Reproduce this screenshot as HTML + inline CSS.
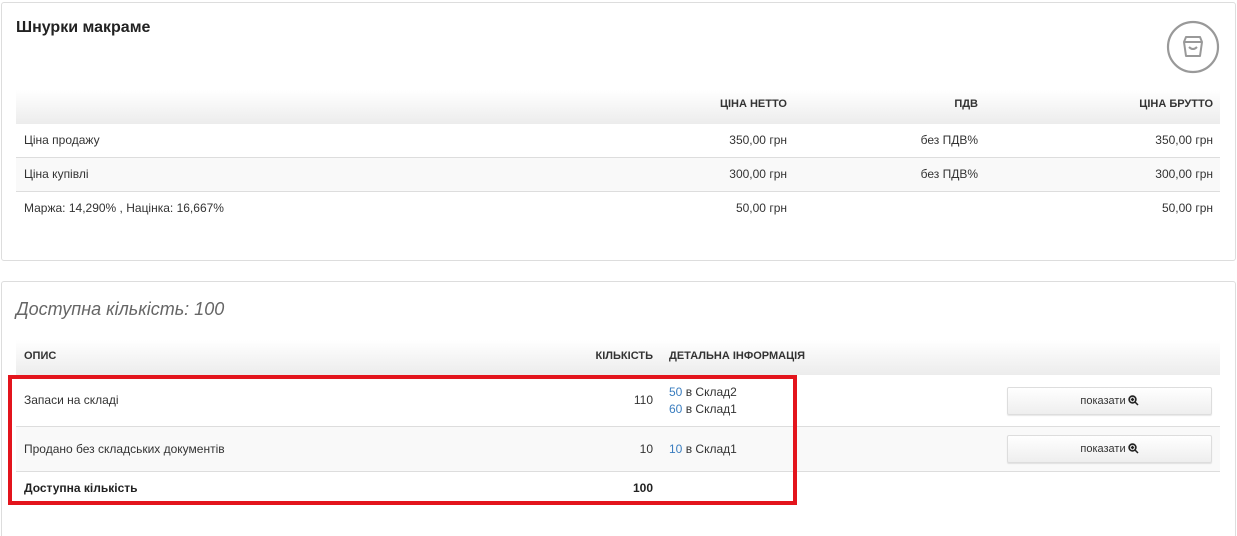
<!DOCTYPE html>
<html><head><meta charset="utf-8"><style>
*{box-sizing:border-box;margin:0;padding:0}
html,body{width:1237px;height:536px;overflow:hidden}
body{background:#fff;font-family:"Liberation Sans",Arial,sans-serif;font-size:12px;color:#333;position:relative}
.panel{position:absolute;border:1px solid #ddd;border-radius:3px;background:#fff}
.abs{position:absolute}
.hdr{position:absolute;background:linear-gradient(#fff,#ececec);}
.th{position:absolute;font-weight:bold;font-size:11px;color:#333}
.row{position:absolute;border-top:1px solid #ddd}
.t{position:absolute;white-space:nowrap}
.r{text-align:right}
.blue{color:#3a7dbf}
.btn{position:absolute;left:1007px;width:205px;height:28px;border:1px solid #ddd;border-radius:2px;background:linear-gradient(#fff,#eee);box-shadow:0 1px 1px rgba(0,0,0,.1);font-size:11px;color:#333;text-align:center;line-height:26px}
.btn svg{vertical-align:-2px;margin-left:2px}
</style></head><body>
<div class="panel" style="left:1px;top:2px;width:1235px;height:259px"></div>
<div class="t" style="left:16px;top:19px;font-size:16px;font-weight:bold;color:#222">Шнурки макраме</div>
<svg class="abs" style="left:1166px;top:20px" width="54" height="54" viewBox="0 0 54 54"><circle cx="27" cy="27" r="25" fill="none" stroke="#999" stroke-width="2.2"/><path d="M18 22 L20 17 H34 L36 22 Z M18 22 H36 L34 36 H20 Z" fill="none" stroke="#999" stroke-width="2" stroke-linejoin="round"/><path d="M23 27 Q27 31 31 27" fill="none" stroke="#999" stroke-width="2"/></svg>
<div class="hdr" style="left:16px;top:90px;width:1204px;height:34px"></div>
<div class="th r" style="left:600px;width:187px;top:98px">ЦІНА НЕТТО</div>
<div class="th r" style="left:800px;width:178px;top:98px">ПДВ</div>
<div class="th r" style="left:1000px;width:213px;top:98px">ЦІНА БРУТТО</div>
<div class="row" style="left:16px;top:157px;width:1204px;height:34px;background:#f9f9f9"></div>
<div class="row" style="left:16px;top:191px;width:1204px;height:34px"></div>
<div class="t" style="left:24px;top:133px">Ціна продажу</div>
<div class="t r" style="left:600px;width:187px;top:133px">350,00 грн</div>
<div class="t r" style="left:800px;width:178px;top:133px">без ПДВ%</div>
<div class="t r" style="left:1000px;width:213px;top:133px">350,00 грн</div>
<div class="t" style="left:24px;top:167px">Ціна купівлі</div>
<div class="t r" style="left:600px;width:187px;top:167px">300,00 грн</div>
<div class="t r" style="left:800px;width:178px;top:167px">без ПДВ%</div>
<div class="t r" style="left:1000px;width:213px;top:167px">300,00 грн</div>
<div class="t" style="left:24px;top:201px">Маржа: 14,290% , Націнка: 16,667%</div>
<div class="t r" style="left:600px;width:187px;top:201px">50,00 грн</div>
<div class="t r" style="left:1000px;width:213px;top:201px">50,00 грн</div>

<div class="panel" style="left:1px;top:281px;width:1235px;height:270px"></div>
<div class="t" style="left:16px;top:299px;font-size:18px;font-style:italic;color:#666">Доступна кількість: 100</div>
<div class="hdr" style="left:16px;top:340px;width:1204px;height:35px"></div>
<div class="th" style="left:24px;top:350px">ОПИС</div>
<div class="th r" style="left:500px;width:153px;top:350px">КІЛЬКІСТЬ</div>
<div class="th" style="left:669px;top:350px">ДЕТАЛЬНА ІНФОРМАЦІЯ</div>
<div class="row" style="left:16px;top:426px;width:1204px;height:45px;background:#f9f9f9"></div>
<div class="row" style="left:16px;top:471px;width:1204px;height:32px"></div>
<div class="t" style="left:24px;top:393px">Запаси на складі</div>
<div class="t r" style="left:500px;width:153px;top:393px">110</div>
<div class="t" style="left:669px;top:385px"><span class="blue">50</span> в Склад2</div>
<div class="t" style="left:669px;top:402px"><span class="blue">60</span> в Склад1</div>
<div class="btn" style="top:387px">показати<svg width="11" height="11" viewBox="0 0 11 11"><circle cx="4.5" cy="4.5" r="3.4" fill="none" stroke="#222" stroke-width="1.6"/><path d="M7 7 L10 10 M2.8 4.5 H6.2 M4.5 2.8 V6.2" stroke="#222" stroke-width="1.5"/></svg></div>
<div class="t" style="left:24px;top:442px">Продано без складських документів</div>
<div class="t r" style="left:500px;width:153px;top:442px">10</div>
<div class="t" style="left:669px;top:442px"><span class="blue">10</span> в Склад1</div>
<div class="btn" style="top:435px">показати<svg width="11" height="11" viewBox="0 0 11 11"><circle cx="4.5" cy="4.5" r="3.4" fill="none" stroke="#222" stroke-width="1.6"/><path d="M7 7 L10 10 M2.8 4.5 H6.2 M4.5 2.8 V6.2" stroke="#222" stroke-width="1.5"/></svg></div>
<div class="t" style="left:24px;top:481px;font-weight:bold;color:#222">Доступна кількість</div>
<div class="t r" style="left:500px;width:153px;top:481px;font-weight:bold;color:#222">100</div>
<div class="abs" style="left:8px;top:375px;width:789px;height:130px;border:4px solid #e3141c"></div>
</body></html>
